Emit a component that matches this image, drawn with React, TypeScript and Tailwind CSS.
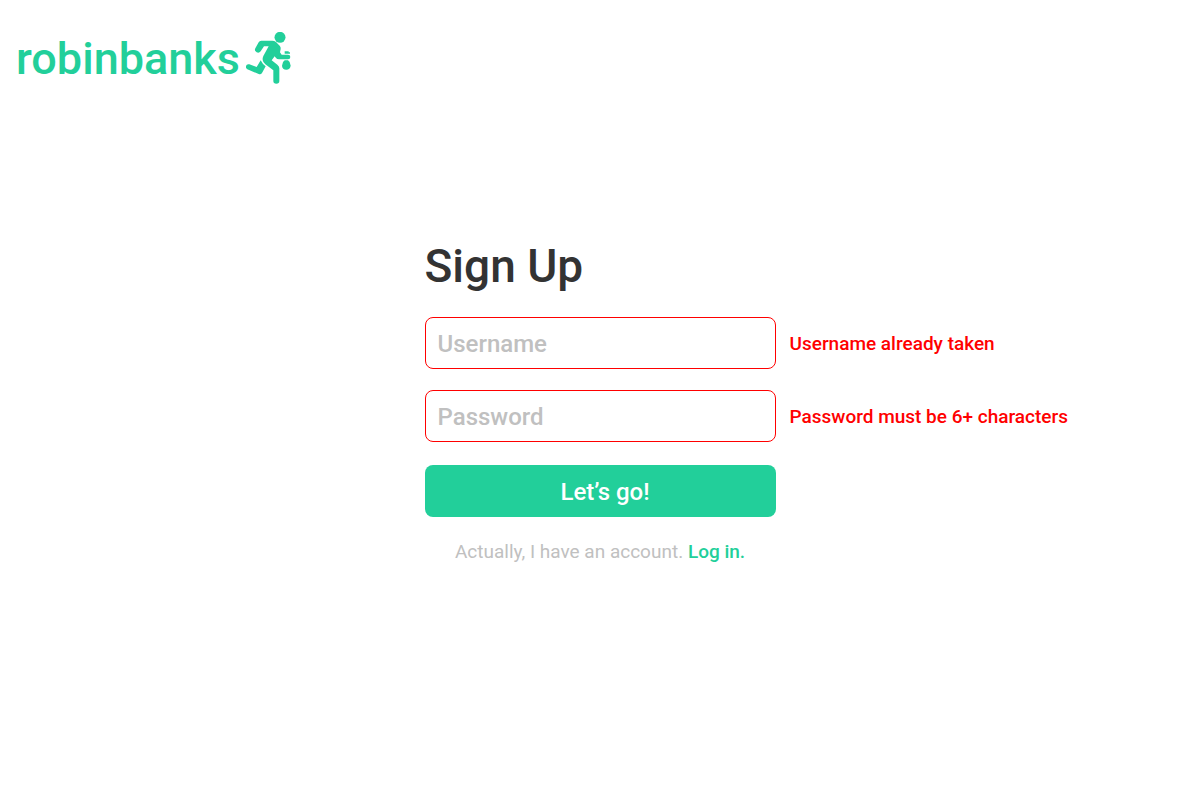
function RunnerIcon() {
  return (
    <svg viewBox="18 16 135 156" className="h-13 w-[45px] shrink-0 fill-current" aria-hidden="true">
      <circle cx="120" cy="32" r="16.5" />
      <path d="M64 42 H97 Q103 42 108 46 L119 57 Q123 61 122 67 L120 77 L125 84 H144 Q151 84 151 91 Q151 98 144 98 H117 Q111 98 108 94 L104 89 L95 101 L112 114 Q118 119 118 125 V163 Q118 171 109 171 Q100 171 100 163 V131 L76 113 Q63 102 70 88 L86 59 H72 L62 74 Q57 81 50 77 Q42 72 46 65 L56 47 Q58 42 64 42 Z" />
      <path d="M62 101 Q67 112 77 119 L66 139 Q62 145 56 142 L22 128 Q16 124 18 118 Q20 111 28 113 L50 121 Z" />
      <path d="M134 74 H146 V77 H150 V81 H134 Z" />
      <path d="M134 101 H144 Q152 106 152 117 Q150 129 139 129 Q127 129 126 117 Q126 106 134 101 Z" />
    </svg>
  );
}

type FieldProps = {
  id: string;
  label: string;
  type: string;
  error: string;
};

function Field({ id, label, type, error }: FieldProps) {
  return (
    <div className="relative">
      <input
        id={id}
        type={type}
        placeholder={label}
        aria-label={label}
        aria-invalid="true"
        aria-describedby={`${id}-error`}
        className="block h-13 w-full rounded-lg border border-[#ff0000] bg-white px-3 pt-0.5 text-2xl font-medium text-[#333333] outline-none placeholder:text-[#c0c0c0]"
      />
      <p
        id={`${id}-error`}
        className="absolute inset-y-0 left-full ml-3.5 flex items-center pt-0.5 text-[19px] font-medium whitespace-nowrap text-[#ff0000]"
      >
        {error}
      </p>
    </div>
  );
}

export default function App() {
  return (
    <div className="min-h-screen bg-white font-['Roboto',sans-serif]">
      <header className="px-4 pt-8">
        <a href="#home" className="inline-flex items-start gap-1.5 text-[#22cf9a]">
          <span className="text-[45px] leading-[54px] font-medium">robinbanks</span>
          <RunnerIcon />
        </a>
      </header>

      <main className="mx-auto mt-38 w-full max-w-[351px]">
        <h1 className="text-[46px] leading-14 font-medium text-[#333333]">Sign Up</h1>
        <form className="mt-[23px]" onSubmit={(event) => event.preventDefault()}>
          <div className="flex flex-col gap-[21px]">
            <Field id="username" label="Username" type="text" error="Username already taken" />
            <Field id="password" label="Password" type="password" error="Password must be 6+ characters" />
          </div>
          <button
            type="submit"
            className="mt-[23px] block h-13 w-full rounded-lg bg-[#22cf9a] pt-0.5 pl-2.5 text-2xl font-medium text-white"
          >
            Let’s go!
          </button>
        </form>
        <p className="mt-[21px] text-center text-[19px] leading-7 text-[#c0c0c0]">
          Actually, I have an account.{" "}
          <a href="#login" className="font-medium text-[#22cf9a]">
            Log in.
          </a>
        </p>
      </main>
    </div>
  );
}
